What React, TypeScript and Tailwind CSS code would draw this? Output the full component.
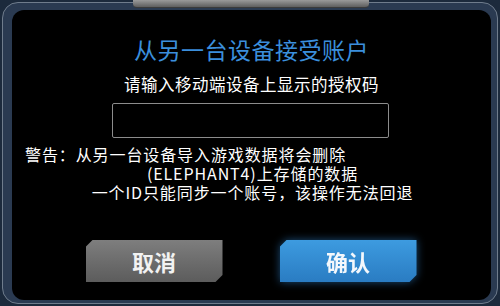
export default function App() {
  return (
    <div
      className="relative w-[500px] h-[306px] overflow-hidden bg-[#1c2a3c]"
      style={{ fontFamily: '"Noto Sans CJK SC", "Noto Sans", sans-serif' }}
    >
      {/* outer frame */}
      <div className="absolute inset-[2px] rounded-[16px] border border-[#6f7c8c] bg-[#2a3a51] pt-[7px] pl-[9px] pr-[6px] pb-[3px]">
        <div className="h-full rounded-[12px] bg-black flex flex-col items-center">
          <h1 className="mt-[25px] text-[23px] leading-[28px] text-[#3b8fdc] tracking-[0.5px]">
            从另一台设备接受账户
          </h1>
          <p className="mt-[10px] text-[16.5px] leading-[22px] text-white tracking-[0.5px]">
            请输入移动端设备上显示的授权码
          </p>
          <div className="mt-[8px] ml-[-2px] w-[277px] h-[35px] rounded-[2px] border border-[#8c8c8c] bg-black" />
          <div className="mt-[7px] w-full text-[16px] leading-[19px] tracking-[0.9px] text-white">
            <p className="pl-[13px]">警告：从另一台设备导入游戏数据将会删除</p>
            <p className="text-center pl-[2px]">(ELEPHANT4)上存储的数据</p>
            <p className="text-center pl-[2px]">一个ID只能同步一个账号，该操作无法回退</p>
          </div>
          <div className="mt-[38px] flex gap-[57px] ml-[-1px]">
            <button className="w-[137px] h-[42px] [clip-path:polygon(7px_0,100%_0,100%_calc(100%-7px),calc(100%-7px)_100%,0_100%,0_7px)] bg-gradient-to-b from-[#7e7e7e] to-[#5c5c5c] text-[#f2f2f2] text-[22px] leading-[42px] font-semibold">
              取消
            </button>
            <div className="drop-shadow-[0_0_4px_rgba(50,140,220,0.55)]">
              <button className="w-[137px] h-[42px] [clip-path:polygon(7px_0,100%_0,100%_calc(100%-7px),calc(100%-7px)_100%,0_100%,0_7px)] bg-gradient-to-b from-[#3d9be0] to-[#2a7cc2] text-[#f4f8fc] text-[22px] leading-[42px] font-semibold">
                确认
              </button>
            </div>
          </div>
        </div>
      </div>
      {/* top tab */}
      <div className="absolute left-[133px] top-0 w-[236px] h-[8px] rounded-b-[4px] bg-gradient-to-b from-[#9a9a9a] to-[#5f5f5f] border-b border-[#3a3a3a]" />
    </div>
  );
}
